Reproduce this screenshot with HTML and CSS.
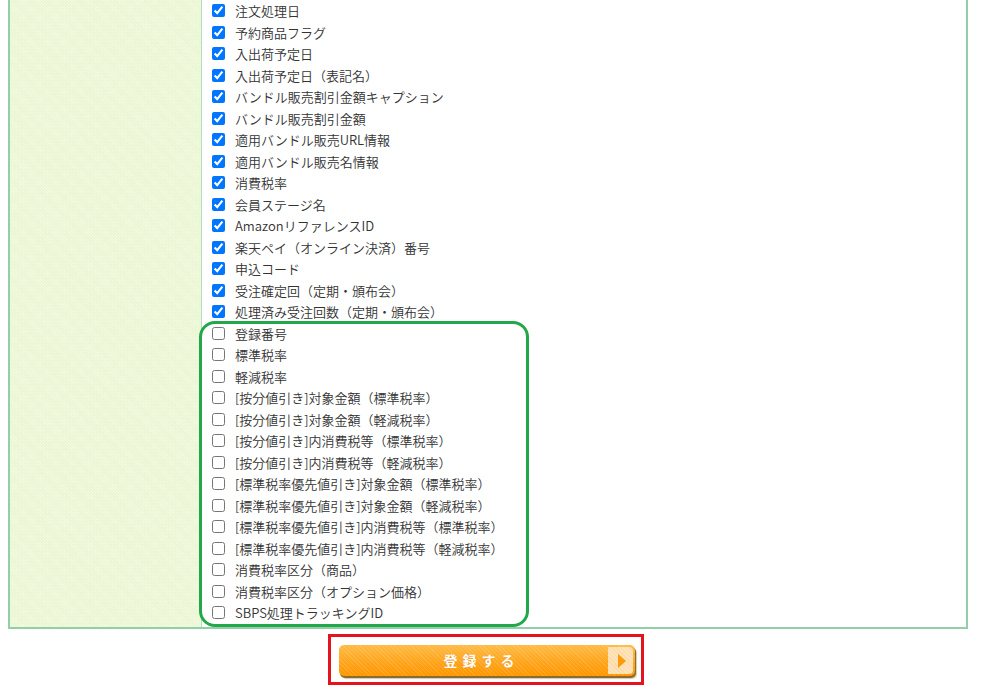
FILE: index.html
```html
<!DOCTYPE html>
<html lang="ja">
<head>
<meta charset="utf-8">
<title>出力項目設定</title>
<link rel="stylesheet" href="styles.css">
</head>
<body>
<div class="page">
  <div class="form">
    <div class="form-label"></div>
    <div class="form-body">
      <div class="opts">
        <label class="opt"><input type="checkbox" checked><span>注文処理日</span></label>
        <label class="opt"><input type="checkbox" checked><span>予約商品フラグ</span></label>
        <label class="opt"><input type="checkbox" checked><span>入出荷予定日</span></label>
        <label class="opt"><input type="checkbox" checked><span>入出荷予定日（表記名）</span></label>
        <label class="opt"><input type="checkbox" checked><span>バンドル販売割引金額キャプション</span></label>
        <label class="opt"><input type="checkbox" checked><span>バンドル販売割引金額</span></label>
        <label class="opt"><input type="checkbox" checked><span>適用バンドル販売URL情報</span></label>
        <label class="opt"><input type="checkbox" checked><span>適用バンドル販売名情報</span></label>
        <label class="opt"><input type="checkbox" checked><span>消費税率</span></label>
        <label class="opt"><input type="checkbox" checked><span>会員ステージ名</span></label>
        <label class="opt"><input type="checkbox" checked><span>AmazonリファレンスID</span></label>
        <label class="opt"><input type="checkbox" checked><span>楽天ペイ（オンライン決済）番号</span></label>
        <label class="opt"><input type="checkbox" checked><span>申込コード</span></label>
        <label class="opt"><input type="checkbox" checked><span>受注確定回（定期・頒布会）</span></label>
        <label class="opt"><input type="checkbox" checked><span>処理済み受注回数（定期・頒布会）</span></label>
        <div class="new-group">
          <label class="opt"><input type="checkbox"><span>登録番号</span></label>
          <label class="opt"><input type="checkbox"><span>標準税率</span></label>
          <label class="opt"><input type="checkbox"><span>軽減税率</span></label>
          <label class="opt"><input type="checkbox"><span>[按分値引き]対象金額（標準税率）</span></label>
          <label class="opt"><input type="checkbox"><span>[按分値引き]対象金額（軽減税率）</span></label>
          <label class="opt"><input type="checkbox"><span>[按分値引き]内消費税等（標準税率）</span></label>
          <label class="opt"><input type="checkbox"><span>[按分値引き]内消費税等（軽減税率）</span></label>
          <label class="opt"><input type="checkbox"><span>[標準税率優先値引き]対象金額（標準税率）</span></label>
          <label class="opt"><input type="checkbox"><span>[標準税率優先値引き]対象金額（軽減税率）</span></label>
          <label class="opt"><input type="checkbox"><span>[標準税率優先値引き]内消費税等（標準税率）</span></label>
          <label class="opt"><input type="checkbox"><span>[標準税率優先値引き]内消費税等（軽減税率）</span></label>
          <label class="opt"><input type="checkbox"><span>消費税率区分（商品）</span></label>
          <label class="opt"><input type="checkbox"><span>消費税率区分（オプション価格）</span></label>
          <label class="opt"><input type="checkbox"><span>SBPS処理トラッキングID</span></label>
        </div>
      </div>
    </div>
  </div>
  <div class="actions">
    <div class="btn-frame">
      <button type="submit" class="btn-submit"><span class="btn-text">登録する</span><span class="btn-arrow"></span></button>
    </div>
  </div>
</div>
</body>
</html>
```
FILE: styles.css
```css
html, body {
  margin: 0;
  padding: 0;
  background: #ffffff;
}
body {
  font-family: "Noto Sans CJK JP", "Noto Sans", sans-serif;
  font-size: 13px;
  font-weight: 350;
  color: #333333;
}
.page {
  width: 960px;
  margin-left: 8px;
}
.form {
  display: flex;
  box-sizing: border-box;
  width: 960px;
  border: 2px solid #92cfa8;
  border-top: none;
}
.form-label {
  width: 191px;
  flex: none;
  border-right: 1px solid #b2dfc0;
  background-color: #f3fae2;
  background-image: repeating-linear-gradient(45deg, #ebf6d4 0 1px, transparent 1px 2px),
                    repeating-linear-gradient(-45deg, #eef7da 0 1px, transparent 1px 2px);
}
.form-body {
  flex: 1;
  padding: 0 6px 3px 6px;
  background: #ffffff;
}
.opts {
  display: flex;
  flex-direction: column;
}
.opt {
  display: flex;
  align-items: center;
  height: 21.5px;
  line-height: 1;
  white-space: nowrap;
}
.opt input {
  width: 13px;
  height: 13px;
  margin: 0 3px 0 4px;
  flex: none;
}
.opt > span {
  padding-left: 7px;
}
.new-group {
  position: relative;
  display: flex;
  flex-direction: column;
}
.new-group::before {
  content: "";
  position: absolute;
  left: -9px;
  top: -1.5px;
  width: 330px;
  height: 306px;
  box-sizing: border-box;
  border: 3.5px solid #22a84a;
  border-radius: 16px;
  pointer-events: none;
}
.actions {
  display: flex;
  justify-content: center;
  padding-top: 5px;
  padding-right: 4px;
}
.btn-frame {
  border: 3px solid #e3141d;
  padding: 8px 6px 6px 8px;
}
.btn-submit {
  display: flex;
  align-items: center;
  width: 296px;
  height: 31px;
  padding: 0 2px 0 0;
  border: none;
  border-radius: 5px;
  background-color: #ff9f0d;
  background-image: repeating-linear-gradient(45deg, rgba(255,255,255,0.12) 0 1px, transparent 1px 3px),
                    linear-gradient(#ffbb45, #ffa41a 55%, #ff9600);
  box-shadow: 1px 2px 0 #8c6b2c, 2px 3px 1px rgba(140,107,44,0.35);
  cursor: pointer;
}
.btn-text {
  flex: 1;
  text-align: center;
  padding-left: 16px;
  font-family: "Noto Sans CJK JP", sans-serif;
  font-size: 14px;
  font-weight: bold;
  letter-spacing: 5px;
  color: #ffffff;
  text-shadow: 0 0 1px rgba(200,110,0,0.5);
}
.btn-arrow {
  position: relative;
  width: 25px;
  height: 27px;
  flex: none;
  border-radius: 0 4px 4px 0;
  background-color: #fde3bb;
  background-image: repeating-linear-gradient(45deg, rgba(255,200,120,0.35) 0 1px, transparent 1px 3px);
}
.btn-arrow::after {
  content: "";
  position: absolute;
  left: 10px;
  top: 7px;
  border-left: 8px solid #ff9a0a;
  border-top: 7px solid transparent;
  border-bottom: 7px solid transparent;
}
```
